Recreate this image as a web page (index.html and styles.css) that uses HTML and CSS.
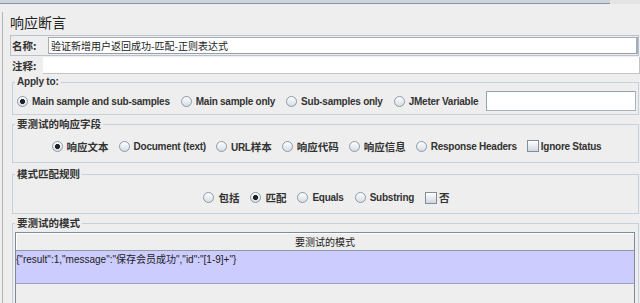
FILE: index.html
```html
<!DOCTYPE html>
<html>
<head>
<meta charset="utf-8">
<link rel="stylesheet" href="styles.css">
</head>
<body>
<div class="topline"><div class="topline-dark"></div></div>
<div class="frame">
  <div class="title">响应断言</div>
  <div class="name-panel">
    <span class="lbl lbl-name">名称:</span>
    <div class="field name-field">验证新增用户返回成功-匹配-正则表达式</div>
  </div>
  <div class="comment-row">
    <span class="lbl lbl-comment">注释:</span>
    <div class="comment-field"></div>
  </div>

  <fieldset class="group g1">
    <legend>Apply to:</legend>
    <div class="opts opts-left">
      <label class="opt"><span class="radio on"></span><span>Main sample and sub-samples</span></label>
      <label class="opt"><span class="radio"></span><span>Main sample only</span></label>
      <label class="opt"><span class="radio"></span><span>Sub-samples only</span></label>
      <label class="opt"><span class="radio"></span><span>JMeter Variable</span></label>
      <div class="var-field"></div>
    </div>
  </fieldset>

  <fieldset class="group g2">
    <legend class="zh">要测试的响应字段</legend>
    <div class="opts opts-center">
      <label class="opt"><span class="radio on"></span><span class="zh">响应文本</span></label>
      <label class="opt"><span class="radio"></span><span>Document (text)</span></label>
      <label class="opt"><span class="radio"></span><span>URL<span class="zh">样本</span></span></label>
      <label class="opt"><span class="radio"></span><span class="zh">响应代码</span></label>
      <label class="opt"><span class="radio"></span><span class="zh">响应信息</span></label>
      <label class="opt"><span class="radio"></span><span>Response Headers</span></label>
      <label class="opt opt-check"><span class="check"></span><span>Ignore Status</span></label>
    </div>
  </fieldset>

  <fieldset class="group g3">
    <legend class="zh">模式匹配规则</legend>
    <div class="opts opts-center opts-rule">
      <label class="opt"><span class="radio"></span><span class="zh">包括</span></label>
      <label class="opt"><span class="radio on"></span><span class="zh">匹配</span></label>
      <label class="opt"><span class="radio"></span><span>Equals</span></label>
      <label class="opt"><span class="radio"></span><span>Substring</span></label>
      <label class="opt opt-check"><span class="check"></span><span class="zh">否</span></label>
    </div>
  </fieldset>

  <fieldset class="group g4">
    <legend class="zh">要测试的模式</legend>
    <div class="table">
      <div class="thead">要测试的模式</div>
      <div class="trow">{"result":1,"message":"保存会员成功","id":"[1-9]+"}</div>
    </div>
  </fieldset>
</div>
</body>
</html>
```

FILE: styles.css
```css
* { box-sizing: border-box; }
html, body { margin: 0; padding: 0; }
body {
  width: 640px;
  height: 303px;
  overflow: hidden;
  background: #eeeeee;
  font-family: "Liberation Sans", "Noto Sans CJK SC", sans-serif;
  font-size: 10px;
  color: #333333;
}
.zh { font-family: "Noto Sans CJK SC", sans-serif; font-size: 10.5px; letter-spacing: 0; }

.topline { display: flex; height: 4px; background: #e4e4e4; }
.topline-dark { width: 610px; background: #cfd3dd; border-bottom: 1px solid #8797aa; }

.frame {
  margin-left: 2px;
  border-left: 1px solid #b4b4b4;
  padding-left: 7px;
  height: 299px;
}
.title {
  margin-top: 8px;
  height: 20px;
  line-height: 20px;
  font-size: 14px;
  font-family: "Noto Sans CJK SC", sans-serif;
  color: #222222;
}

.lbl {
  font-family: "Noto Sans CJK SC", sans-serif;
  font-weight: bold;
  font-size: 10.5px;
  color: #333333;
  flex: none;
  white-space: nowrap;
}
.name-panel {
  margin-top: 3px;
  display: flex;
  align-items: center;
  width: 629px;
  height: 21px;
  border: 1px solid #bac1cb;
  padding: 1px 0;
}
.lbl-name { width: 37px; padding-left: 1px; }
.field {
  flex: 1;
  height: 17px;
  background: #ffffff;
  border-top: 1px solid #a3acb8;
  border-left: 1px solid #a3acb8;
  border-bottom: 1px solid #959fab;
  border-right: 2px solid #a3acb8;
  padding-left: 2px;
  line-height: 15px;
  color: #222222;
  font-family: "Noto Sans CJK SC", sans-serif;
  font-size: 10px;
  white-space: nowrap;
}
.comment-row {
  display: flex;
  align-items: center;
  width: 630px;
  height: 18px;
}
.lbl-comment { width: 33px; padding-left: 2px; overflow: hidden; }
.comment-field {
  flex: 1;
  height: 17px;
  margin-top: 1px;
  background: #ffffff;
  border-bottom: 1px solid #c4c4c4;
  border-right: 1px solid #c4c4c4;
}

.group {
  margin: 0 0 0 2px;
  width: 627px;
  min-width: 0;
  border: 1px solid #c6d0da;
  padding: 0 0 0 2px;
}
.group legend {
  padding: 0 2px;
  height: 12px;
  line-height: 12px;
  font-weight: bold;
  color: #333333;
  letter-spacing: -0.2px;
}
.group legend.zh { letter-spacing: 0; }
.g1 { margin-top: 2px; }
.g2 { margin-top: 3px; }
.g3 { margin-top: 5px; }
.g4 { margin-top: 3px; height: 90px; border-bottom: none; padding-top: 3px; }

.opts {
  display: flex;
  align-items: center;
  gap: 11px;
  font-weight: bold;
  letter-spacing: -0.25px;
  white-space: nowrap;
}
.opts .zh { letter-spacing: 0; }
.g1 .opts { height: 26px; padding-left: 2px; }
.g2 .opts { height: 32px; }
.g3 .opts { height: 33px; padding-top: 2px; }
.opts-center { justify-content: center; }
.g2 .opts-center { gap: 10px; padding-left: 0; }
.opts-rule { gap: 11px; }

.opt { display: flex; align-items: center; gap: 4px; }
.opt-check { gap: 2px; }
.radio {
  flex: none;
  width: 11px;
  height: 11px;
  border-radius: 50%;
  border: 1px solid #8a9aab;
  background: linear-gradient(#ffffff, #d6dde5);
}
.radio.on {
  background: radial-gradient(circle, #222222 0, #222222 2.2px, rgba(0,0,0,0) 2.9px), linear-gradient(#ffffff, #d6dde5);
}
.check {
  flex: none;
  width: 12px;
  height: 12px;
  border: 1px solid #7f8e9d;
  background: linear-gradient(#ffffff, #cfd7e0);
}
.var-field {
  flex: 1;
  height: 20px;
  margin-left: -3px;
  margin-right: 2px;
  background: #ffffff;
  border-top: 1px solid #98a3b0;
  border-left: 1px solid #98a3b0;
  border-bottom: 1px solid #aab3bd;
  border-right: 1px solid #aab3bd;
}

.table {
  width: 620px;
  height: 80px;
  border: 1px solid #7d8c9b;
  border-bottom: none;
  background: #eeeeee;
}
.thead {
  height: 18px;
  line-height: 17px;
  text-align: center;
  border-bottom: 1px solid #8c9aa8;
  box-shadow: inset 1px 1px 0 #ffffff;
  font-family: "Noto Sans CJK SC", sans-serif;
  font-size: 10px;
  color: #222222;
}
.trow {
  height: 33px;
  background: #ccccff;
  border-bottom: 1px solid #a2a2bc;
  padding: 3px 0 0 0;
  line-height: 12px;
  color: #222222;
  font-size: 10px;
  white-space: nowrap;
}
```
